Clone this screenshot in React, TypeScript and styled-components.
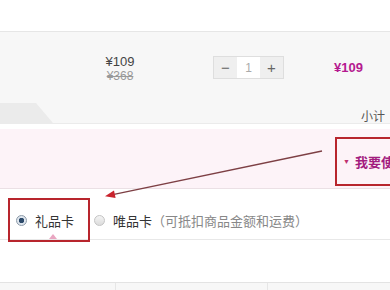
import React from "react";
import styled, { createGlobalStyle } from "styled-components";

const Global = createGlobalStyle`
  html, body {
    margin: 0;
    padding: 0;
    background: #fff;
    overflow: hidden;
  }
  body {
    font-family: "Liberation Sans", "Noto Sans CJK SC", sans-serif;
    color: #333;
  }
`;

function App() {
  return (
    <>
      <Global />
      <Page>
        <TopBar />
        <ProductRow>
          <PriceCol>
            <Price>¥109</Price>
            <OldPrice>¥368</OldPrice>
          </PriceCol>
          <QtyBox>
            <QtyButton>−</QtyButton>
            <QtyInput>1</QtyInput>
            <QtyButton>+</QtyButton>
          </QtyBox>
          <Subtotal>¥109</Subtotal>
        </ProductRow>
        <HeaderRow>
          <Tab />
          <HeaderLabel>小计</HeaderLabel>
        </HeaderRow>
        <PinkPanel>
          <Callout>
            <Caret>▼</Caret>
            我要使用礼品卡
          </Callout>
        </PinkPanel>
        <OptionRow>
          <Option>
            <Radio checked />
            <OptionLabel>礼品卡</OptionLabel>
          </Option>
          <Option>
            <Radio />
            <OptionLabel>
              唯品卡<Hint>（可抵扣商品金额和运费）</Hint>
            </OptionLabel>
          </Option>
          <Pointer />
          <Highlight />
        </OptionRow>
        <BottomTable>
          <Cell />
          <Cell>商品信息</Cell>
          <Cell>单价</Cell>
        </BottomTable>
        <Arrow width="390" height="290" viewBox="0 0 390 290">
          <line x1="322" y1="151" x2="114" y2="194.3" stroke="#7d3f44" strokeWidth="1.3" />
          <polygon points="105,196.2 115.6,198 114,190.6" fill="#c9232d" />
        </Arrow>
      </Page>
    </>
  );
}

const Page = styled.div`
  position: relative;
  width: 390px;
  height: 290px;
  overflow: hidden;
`;

const TopBar = styled.div`
  height: 31px;
  border-bottom: 1px solid #e6e6e6;
`;

const ProductRow = styled.div`
  display: flex;
  align-items: center;
  height: 71px;
  background: #f7f7f7;
`;

const PriceCol = styled.div`
  display: flex;
  flex-direction: column;
  align-items: center;
  width: 60px;
  margin-left: 90px;
  margin-top: 2px;
`;

const Price = styled.div`
  font-size: 13px;
  line-height: 15px;
  color: #444;
`;

const OldPrice = styled.div`
  font-size: 12px;
  line-height: 14px;
  color: #999;
  text-decoration: line-through;
`;

const QtyBox = styled.div`
  display: flex;
  margin-left: 63px;
  height: 21px;
  border: 1px solid #dedede;
`;

const QtyButton = styled.div`
  width: 23px;
  display: flex;
  align-items: center;
  justify-content: center;
  background: #efefef;
  color: #666;
  font-size: 15px;
`;

const QtyInput = styled.div`
  width: 23px;
  display: flex;
  align-items: center;
  justify-content: center;
  background: #fff;
  color: #aaa;
  font-size: 12px;
`;

const Subtotal = styled.div`
  margin-left: 50px;
  font-size: 13px;
  font-weight: bold;
  color: #b51a90;
`;

const HeaderRow = styled.div`
  display: flex;
  align-items: center;
  height: 20px;
  background: #f7f7f7;
  border-bottom: 1px solid #ebebeb;
`;

const Tab = styled.div`
  align-self: stretch;
  width: 53px;
  background: #ebebeb;
  clip-path: polygon(0 0, 36px 0, 53px 100%, 0 100%);
`;

const HeaderLabel = styled.div`
  margin-left: auto;
  margin-right: 5px;
  margin-top: 4px;
  font-size: 12px;
  color: #555;
`;

const PinkPanel = styled.div`
  display: flex;
  justify-content: flex-end;
  margin-top: 5px;
  height: 51px;
  padding-top: 8px;
  background: #fdf3f8;
  border-bottom: 1px solid #ebe0e5;
`;

const Callout = styled.div`
  display: flex;
  align-items: center;
  width: 90px;
  height: 45px;
  margin-right: -45px;
  padding-left: 6px;
  border: 2px solid #b8252d;
  color: #a31c7f;
  font-size: 13px;
  font-weight: bold;
  white-space: nowrap;
`;

const Caret = styled.span`
  font-size: 7px;
  margin-right: 5px;
  color: #c0306f;
`;

const OptionRow = styled.div`
  position: relative;
  display: flex;
  align-items: center;
  gap: 20px;
  height: 38px;
  padding: 12px 0 0 16px;
  border-bottom: 1px solid #e8e8e8;
`;

const Option = styled.div`
  display: flex;
  align-items: center;
  gap: 8px;
`;

const Radio = styled.span<{ checked?: boolean }>`
  box-sizing: border-box;
  width: 11px;
  height: 11px;
  border-radius: 50%;
  border: 1px solid ${(p) => (p.checked ? "#8c9aa8" : "#c4c4c4")};
  background: ${(p) =>
    p.checked
      ? "radial-gradient(circle, #2d4a6a 0 2.5px, #dfe6ee 3px)"
      : "linear-gradient(#f4f4f4, #dcdcdc)"};
`;

const OptionLabel = styled.span`
  font-size: 13px;
  color: #333;
`;

const Hint = styled.span`
  color: #888;
`;

const Pointer = styled.div`
  position: absolute;
  left: 49px;
  bottom: 0;
  width: 0;
  height: 0;
  border-left: 4px solid transparent;
  border-right: 4px solid transparent;
  border-bottom: 5px solid #e9a6c1;
`;

const Highlight = styled.div`
  position: absolute;
  left: 8px;
  top: 9px;
  width: 78px;
  height: 40px;
  border: 2px solid #b8252d;
`;

const BottomTable = styled.div`
  display: grid;
  grid-template-columns: 115px 152px 1fr;
  margin-top: 42px;
  height: 20px;
  border-top: 1px solid #e3e3e3;
  background: #f7f7f7;
`;

const Cell = styled.div`
  padding-top: 5px;
  text-align: center;
  font-size: 12px;
  color: #bbb;
  & + & {
    border-left: 1px solid #e6e6e6;
  }
`;

const Arrow = styled.svg`
  position: absolute;
  left: 0;
  top: 0;
  pointer-events: none;
`;

export default App;
